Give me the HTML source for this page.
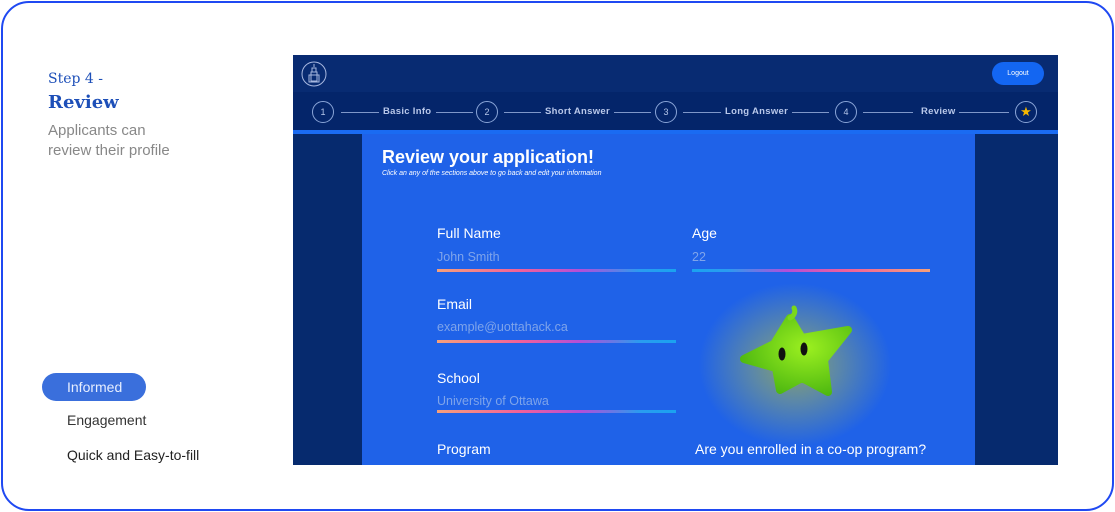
<!DOCTYPE html>
<html><head><style>
*{margin:0;padding:0;box-sizing:border-box}
body{width:1115px;height:512px;background:#fff;position:relative;overflow:hidden;font-family:"Liberation Sans",sans-serif}
.frame{position:absolute;left:1px;top:1px;width:1113px;height:510px;border:2px solid #1f49f2;border-radius:28px}
.a{position:absolute;white-space:nowrap}
.shot{position:absolute;left:293px;top:55px;width:765px;height:410px;background:#062a6e;overflow:hidden}
.nav{position:absolute;left:0;top:0;width:765px;height:37px;background:#082b72}
.step{position:absolute;left:0;top:37px;width:765px;height:38px;background:#04256a}
.bar{position:absolute;left:0;top:75px;width:765px;height:4px;background:#1a6bf2}
.center{position:absolute;left:69px;top:79px;width:613px;height:331px;background:#1f62e8}
.c{position:absolute;width:22px;height:22px;border:1px solid #8aa5d8;border-radius:50%;color:#b5c6ea;font-size:9px;text-align:center;line-height:20px;top:46px}
.l{position:absolute;height:1px;background:#7f97c9;top:57px}
.st{position:absolute;top:51px;color:#b9c8ea;font-size:9.5px;font-weight:bold;letter-spacing:.3px}
.lab{position:absolute;color:#fff;font-size:14px}
.val{position:absolute;color:#7fa4ea;font-size:12.5px}
.ln{position:absolute;height:3px;background:linear-gradient(90deg,#f6a07a,#f0609a 35%,#b24fd8 60%,#2a9cf0 85%,#1aa3f0)}
</style></head><body>
<div class="frame"></div>
<div class="a" style="left:48px;top:71px;color:#1d4fb8;font-family:'DejaVu Serif',serif;font-size:14px">Step 4 -</div>
<div class="a" style="left:48px;top:92px;color:#1d4fb8;font-family:'DejaVu Serif',serif;font-size:18px;font-weight:bold">Review</div>
<div class="a" style="left:48px;top:121px;color:#888;font-size:15px;line-height:20px">Applicants can<br>review their profile</div>
<div class="a" style="left:42px;top:373px;width:104px;height:28px;background:#3a6fdc;border-radius:14px;color:#e6eeff;font-size:14px;line-height:28px;padding-left:25px">Informed</div>
<div class="a" style="left:67px;top:412px;color:#333;font-size:14px">Engagement</div>
<div class="a" style="left:67px;top:447px;color:#222;font-size:14px">Quick and Easy-to-fill</div>

<div class="shot">
<div class="nav"></div>
<svg class="a" style="left:8px;top:6px" width="26" height="26" viewBox="0 0 26 26"><circle cx="13" cy="13" r="12" fill="none" stroke="#a8b8e0" stroke-width="1"/><path d="M13 3v3M11 7h4v4h-4zM10 11h6v9h-6zM8 14h10v7H8z" fill="none" stroke="#a8b8e0" stroke-width="1"/></svg>
<div class="a" style="left:699px;top:7px;width:52px;height:23px;background:#1366f2;border-radius:12px;color:#fff;font-size:7px;text-align:center;line-height:23px">Logout</div>
<div class="step"></div>
<div class="bar"></div>
<div class="c" style="left:19px">1</div><div class="l" style="left:48px;width:38px"></div><div class="st" style="left:90px">Basic Info</div><div class="l" style="left:143px;width:37px"></div>
<div class="c" style="left:183px">2</div><div class="l" style="left:211px;width:37px"></div><div class="st" style="left:252px">Short Answer</div><div class="l" style="left:321px;width:37px"></div>
<div class="c" style="left:362px">3</div><div class="l" style="left:390px;width:38px"></div><div class="st" style="left:432px">Long Answer</div><div class="l" style="left:499px;width:37px"></div>
<div class="c" style="left:542px">4</div><div class="l" style="left:570px;width:50px"></div><div class="st" style="left:628px">Review</div><div class="l" style="left:666px;width:50px"></div>
<div class="c" style="left:722px;color:#f6b800;font-size:13px">★</div>
<div class="center">
<div class="lab" style="left:20px;top:13px;font-size:18px;font-weight:bold">Review your application!</div>
<div class="lab" style="left:20px;top:36px;font-size:7px;font-style:italic">Click an any of the sections above to go back and edit your information</div>
<div class="lab" style="left:75px;top:91px">Full Name</div><div class="val" style="left:75px;top:116px">John Smith</div><div class="ln" style="left:75px;top:135px;width:239px"></div>
<div class="lab" style="left:330px;top:91px">Age</div><div class="val" style="left:330px;top:116px">22</div><div class="ln" style="left:330px;top:135px;width:238px;transform:scaleX(-1)"></div>
<div class="lab" style="left:75px;top:162px">Email</div><div class="val" style="left:75px;top:186px">example@uottahack.ca</div><div class="ln" style="left:75px;top:206px;width:239px"></div>
<div class="lab" style="left:75px;top:236px">School</div><div class="val" style="left:75px;top:260px">University of Ottawa</div><div class="ln" style="left:75px;top:276px;width:239px"></div>
<div class="lab" style="left:75px;top:307px">Program</div>
<div class="lab" style="left:333px;top:307px">Are you enrolled in a co-op program?</div>
<div class="a" style="left:333px;top:146px;width:200px;height:170px;border-radius:50%;background:radial-gradient(ellipse,#8aa36a 0%,#5c88a8 30%,rgba(31,98,232,0) 68%)"></div>
<svg class="a" style="left:0;top:0" width="613" height="331" viewBox="0 0 613 331"><defs><radialGradient id="g" cx="0.6" cy="0.4" r="0.7"><stop offset="0" stop-color="#9cf020"/><stop offset="1" stop-color="#4ab510"/></radialGradient></defs><polygon points="428,184 440,204 486,196 462,226 466,258 440,244 418,256 414,234 382,225 412,210" fill="url(#g)" stroke="url(#g)" stroke-width="8" stroke-linejoin="round"/><path d="M428 184c4-2 6-6 4-10" stroke="#7ad81a" stroke-width="5" fill="none" stroke-linecap="round"/><ellipse cx="420" cy="220" rx="3.5" ry="6.5" fill="#111"/><ellipse cx="442" cy="215" rx="3.5" ry="6.5" fill="#111"/></svg>
</div>
</div>
</body></html>
